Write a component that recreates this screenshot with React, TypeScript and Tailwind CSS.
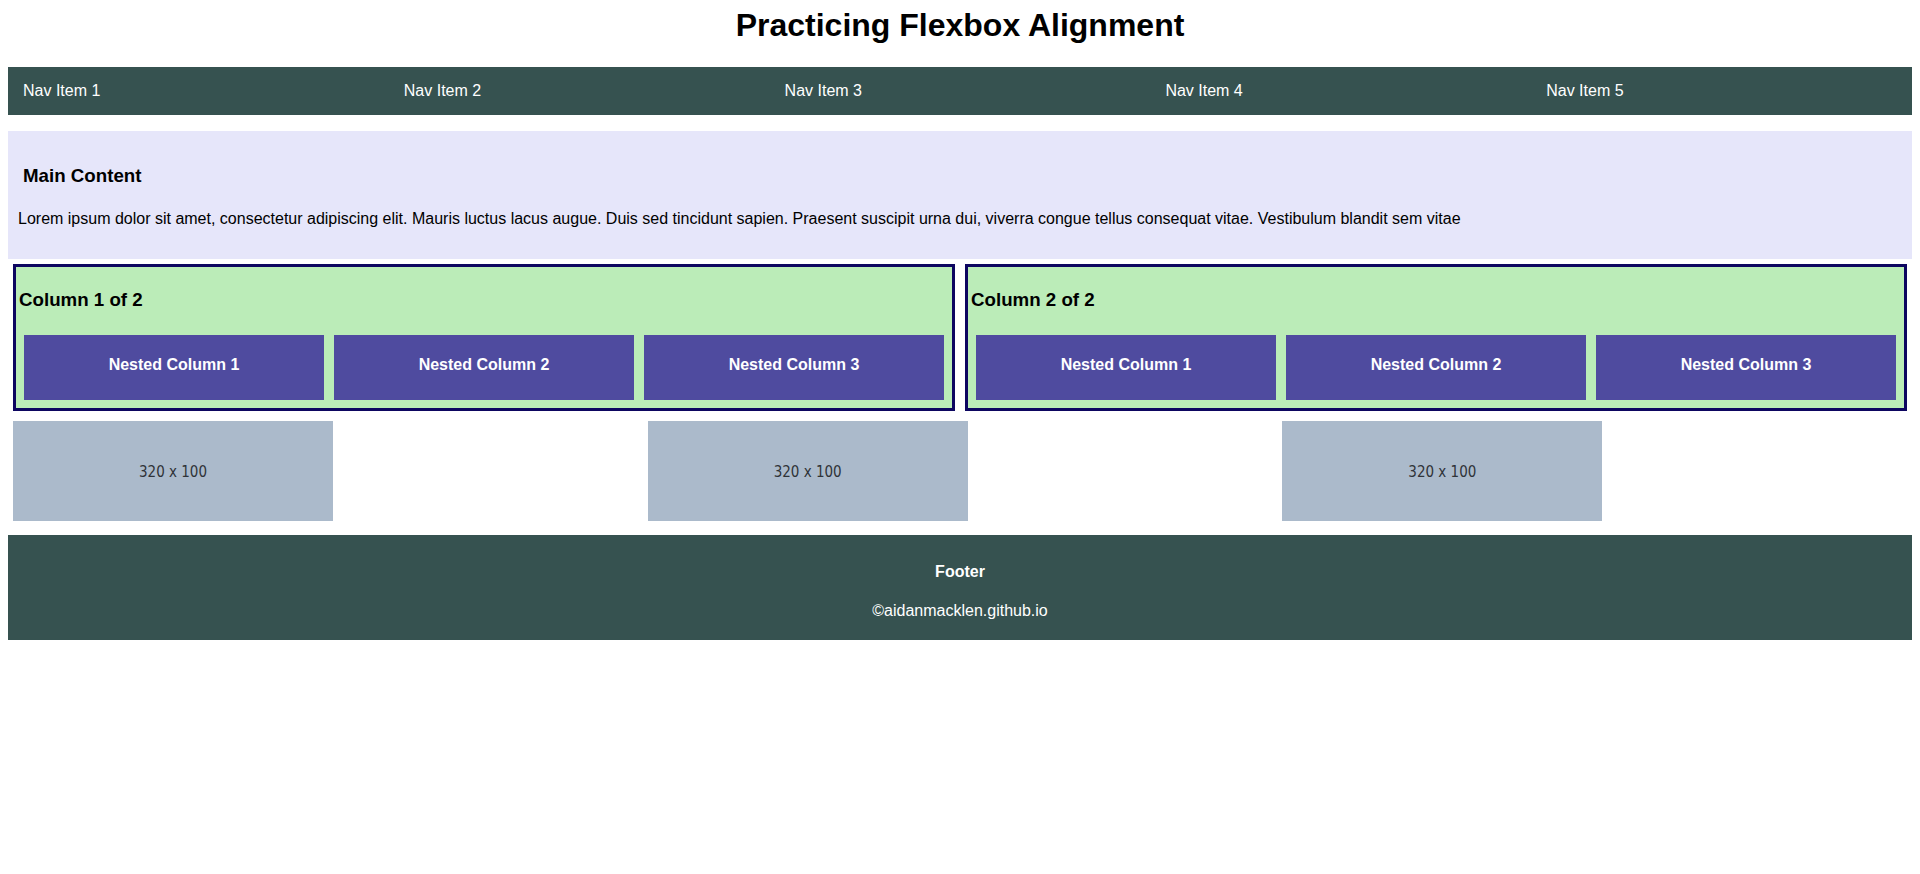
const navItems = ["Nav Item 1", "Nav Item 2", "Nav Item 3", "Nav Item 4", "Nav Item 5"];
const nested = ["Nested Column 1", "Nested Column 2", "Nested Column 3"];

function Column({ title }: { title: string }) {
  return (
    <div className="flex-1 m-[5px] border-[3px] border-[#0d0660] bg-[#bbecb8] p-[3px]">
      <h3 className="mt-[19px] mb-[19px] text-[18.72px] leading-[22px] font-bold text-black">
        {title}
      </h3>
      <div className="flex">
        {nested.map((n) => (
          <div
            key={n}
            className="flex-1 m-[5px] h-[65px] pb-[5px] bg-[#4f4b9f] flex items-center justify-center text-white font-bold text-base"
          >
            {n}
          </div>
        ))}
      </div>
    </div>
  );
}

function Placeholder() {
  return (
    <div className="flex-1">
      <div className="m-[5px] w-[320px] h-[100px] pt-[2px] bg-[#abbacb] flex items-center justify-center">
        <span className="text-[15px] text-[#2f3338] font-['DejaVu_Sans_Condensed','DejaVu_Sans',sans-serif]">
          320 x 100
        </span>
      </div>
    </div>
  );
}

export default function App() {
  return (
    <div className="min-h-screen bg-white px-2 pt-[7px] font-['Liberation_Sans',Arial,sans-serif] text-black">
      <h1 className="text-center text-[32px] leading-[37px] font-bold mb-[23px]">
        Practicing Flexbox Alignment
      </h1>

      {/* nav */}
      <nav className="flex h-[48px] bg-[#365250]">
        {navItems.map((item) => (
          <div key={item} className="flex-1 flex items-center px-[15px] text-white text-base">
            {item}
          </div>
        ))}
      </nav>

      {/* main */}
      <main className="mt-[16px] bg-[#e6e6fa] pt-[34px] pb-[31px]">
        <h3 className="pl-[15px] text-[18.72px] leading-[22px] font-bold">Main Content</h3>
        <p className="pl-[10px] mt-[23px] text-base leading-[18px]">
          Lorem ipsum dolor sit amet, consectetur adipiscing elit. Mauris luctus lacus augue. Duis sed
          tincidunt sapien. Praesent suscipit urna dui, viverra congue tellus consequat vitae.
          Vestibulum blandit sem vitae
        </p>
      </main>

      <div className="flex">
        <Column title="Column 1 of 2" />
        <Column title="Column 2 of 2" />
      </div>

      <div className="flex">
        <Placeholder />
        <Placeholder />
        <Placeholder />
      </div>

      <footer className="mt-[9px] bg-[#365250] text-white text-center pt-[28px] pb-[20px]">
        <h4 className="font-bold text-base leading-[18px]">Footer</h4>
        <p className="mt-[21px] text-base leading-[18px]">©aidanmacklen.github.io</p>
      </footer>
    </div>
  );
}
